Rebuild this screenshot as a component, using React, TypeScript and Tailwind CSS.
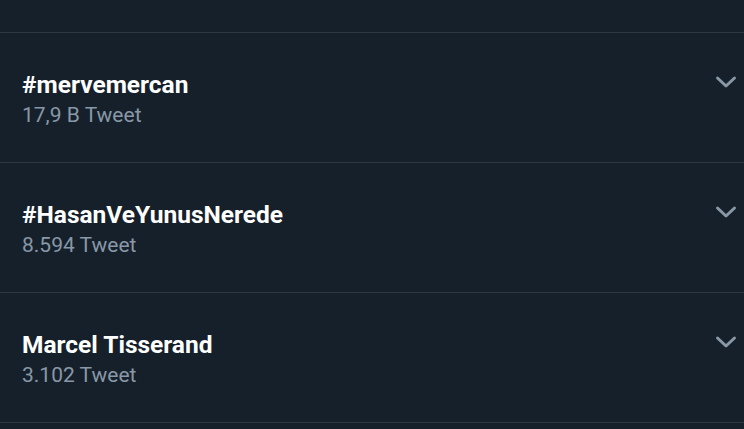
const trends = [
  { title: "#mervemercan", count: "17,9 B Tweet" },
  { title: "#HasanVeYunusNerede", count: "8.594 Tweet" },
  { title: "Marcel Tisserand", count: "3.102 Tweet" },
];

function Chevron() {
  return (
    <svg
      className="absolute right-[7px] top-[42px]"
      width="22"
      height="14"
      viewBox="0 0 22 14"
      fill="none"
      stroke="#8898a6"
      strokeWidth="3"
      strokeLinecap="round"
      strokeLinejoin="round"
    >
      <path d="M2.5 3 L11 11 L19.5 3" />
    </svg>
  );
}

export default function App() {
  return (
    <div className="w-[744px] h-[429px] overflow-hidden bg-[#16202b] font-['Roboto',sans-serif]">
      <div className="h-[33px] border-b border-[#2d3843]" />
      {trends.map((t) => (
        <div
          key={t.title}
          className="relative h-[130px] border-b border-[#2d3843] pl-[22px] pt-[37px]"
        >
          <div className="text-[24.5px] leading-[30px] font-bold text-white">
            {t.title}
          </div>
          <div className="text-[21px] leading-[28px] mt-[1px] text-[#8898a6]">
            {t.count}
          </div>
          <Chevron />
        </div>
      ))}
    </div>
  );
}
